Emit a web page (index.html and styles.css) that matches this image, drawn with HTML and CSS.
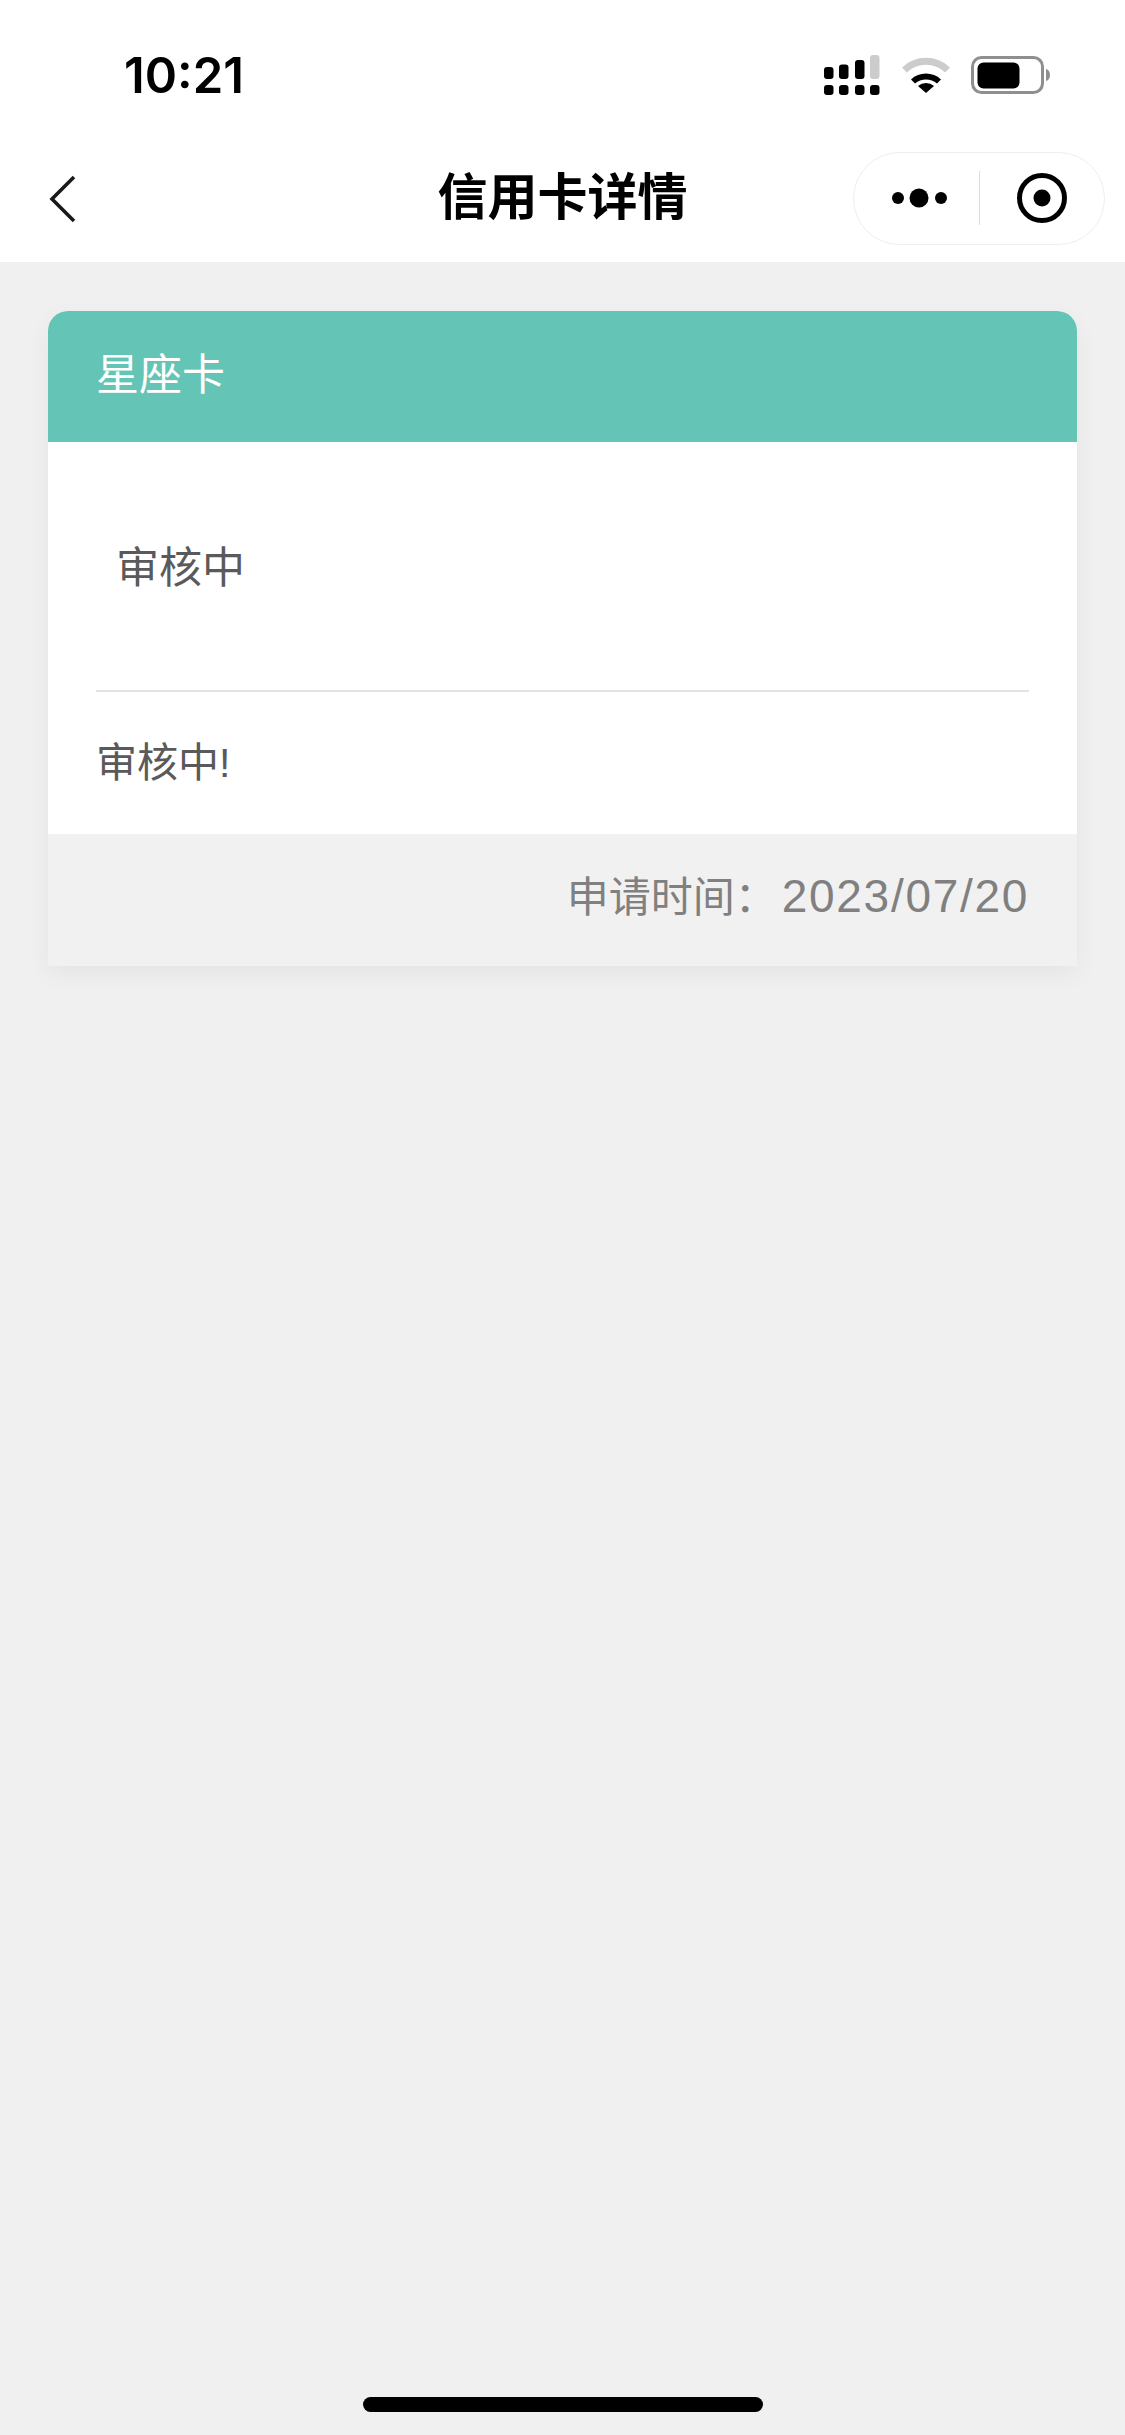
FILE: index.html
```html
<!DOCTYPE html>
<html lang="zh-CN">
<head>
    <meta charset="UTF-8">
    <meta name="viewport" content="width=device-width, initial-scale=1.0">
    <title>信用卡详情</title>
    <link rel="stylesheet" href="styles.css">
</head>
<body>
    <div class="page">
        <header class="top">
            <div class="status">
                <span class="time">10:21</span>
                <div class="status-icons">
                    <svg class="signal" width="58" height="40" viewBox="0 0 58 40">
                        <rect x="1" y="12" width="9.5" height="12" rx="3"/>
                        <rect x="16" y="9.5" width="9.5" height="14.5" rx="3"/>
                        <rect x="32" y="5" width="9.5" height="19" rx="3"/>
                        <rect x="47" y="0" width="9.5" height="24" rx="3" fill="#ccc"/>
                        <rect x="1" y="30" width="9.5" height="10" rx="3"/>
                        <rect x="16" y="30" width="9.5" height="10" rx="3"/>
                        <rect x="32" y="30" width="9.5" height="10" rx="3"/>
                        <rect x="47" y="30" width="9.5" height="10" rx="3"/>
                    </svg>
                    <svg class="wifi" width="48" height="36" viewBox="0 0 48 36">
                        <path d="M2.500 13a31 31 0 0 1 43 0" fill="none" stroke="#ccc" stroke-width="7"/>
                        <path d="M9 22.500a22 22 0 0 1 30 0l-4 4a17 17 0 0 0-22 0z"/>
                        <path d="M16 29a12 12 0 0 1 16 0l-8 7z"/>
                    </svg>
                    <svg class="battery" width="80" height="38" viewBox="0 0 80 38">
                        <rect x="1.500" y="1.500" width="70" height="35" rx="9" fill="none" stroke="#8f8f8f" stroke-width="3"/>
                        <rect x="6.500" y="6.500" width="42" height="26" rx="6"/>
                        <path d="M75 13c2.500.5 4 3 4 6s-1.500 5.500-4 6z" fill="#8f8f8f"/>
                    </svg>
                </div>
            </div>
            <nav class="nav">
                <svg class="back" width="30" height="50" viewBox="0 0 30 50">
                    <path d="M26 3 4 25l22 22" fill="none" stroke="#1a1a1a" stroke-width="3.6"/>
                </svg>
                <h1 class="title">信用卡详情</h1>
                <div class="capsule">
                    <svg width="64" height="20" viewBox="0 0 64 20">
                        <circle cx="10" cy="10" r="6"/>
                        <circle cx="31" cy="10" r="9.5"/>
                        <circle cx="53" cy="10" r="6"/>
                    </svg>
                    <span class="capsule-line"></span>
                    <svg width="52" height="52" viewBox="0 0 52 52">
                        <circle cx="26" cy="26" r="22.500" fill="none" stroke="#000" stroke-width="5"/>
                        <circle cx="26" cy="26" r="8.500"/>
                    </svg>
                </div>
            </nav>
        </header>

        <main class="content">
            <section class="card">
                <div class="card-head">星座卡</div>
                <div class="card-status">审核中</div>
                <div class="card-msg">审核中!</div>
                <div class="card-foot">申请时间：<span class="date">2023/07/20</span></div>
            </section>
        </main>

        <div class="home"><span class="home-bar"></span></div>
    </div>
</body>
</html>
```

FILE: styles.css
```css
* {
    box-sizing: border-box;
}

body {
    margin: 0;
    font-family: "Liberation Sans", "Noto Sans CJK SC", sans-serif;
    background-color: #f0f0f0;
}

.page {
    display: flex;
    flex-direction: column;
    height: 2435px;
    overflow: hidden;
}

.top {
    height: 262px;
    background-color: #fff;
}

.status {
    display: flex;
    justify-content: space-between;
    align-items: center;
    height: 150px;
    padding: 0 74px 0 124px;
}

.time {
    font-family: Inter, sans-serif;
    font-size: 49px;
    font-weight: 600;
    color: #000;
}

.status-icons {
    display: flex;
    align-items: center;
    gap: 21px;
}

.nav {
    display: flex;
    align-items: center;
    justify-content: space-between;
    height: 112px;
    padding: 0 20px 16px 48px;
    position: relative;
}

.back {
    margin-top: 1px;
}

.title {
    position: absolute;
    left: 0;
    right: 0;
    margin: 0;
    padding-bottom: 10px;
    text-align: center;
    font-size: 50px;
    font-weight: 700;
    color: #000;
}

.capsule {
    display: flex;
    align-items: center;
    width: 252px;
    height: 93px;
    padding: 0 0 0 33.5px;
    border: 1.5px solid #eee;
    border-radius: 47px;
    background-color: #fff;
    gap: 27px;
    position: relative;
}

.capsule-line {
    width: 1.5px;
    height: 54px;
    background-color: #ddd;
    margin-right: 9px;
}

.content {
    flex: 1;
    padding: 49px 48px 0;
}

.card {
    border-radius: 20px 20px 0 0;
    background-color: #fff;
    box-shadow: 0 8px 24px rgba(0, 0, 0, 0.05);
    overflow: hidden;
}

.card-head {
    height: 131px;
    padding: 0 48px 11px;
    display: flex;
    align-items: center;
    background-color: #64c4b5;
    color: #fff;
    font-size: 43px;
}

.card-status {
    height: 250px;
    margin: 0 48px;
    padding: 0 20px 5px;
    display: flex;
    align-items: center;
    border-bottom: 2px solid #e3e3e3;
    color: #5a5a5a;
    font-size: 43px;
}

.card-msg {
    height: 142px;
    padding: 0 48px 8px;
    display: flex;
    align-items: center;
    color: #5a5a5a;
    font-size: 41px;
}

.card-foot {
    height: 132px;
    padding-right: 48px;
    line-height: 124px;
    text-align: right;
    background-color: #f1f1f1;
    color: #808080;
    font-size: 42px;
}

.date {
    margin-left: 5px;
    font-size: 46px;
    letter-spacing: 1.7px;
}

.home {
    display: flex;
    justify-content: center;
    padding-bottom: 23px;
}

.home-bar {
    width: 400px;
    height: 15px;
    border-radius: 8px;
    background-color: #000;
}
```
